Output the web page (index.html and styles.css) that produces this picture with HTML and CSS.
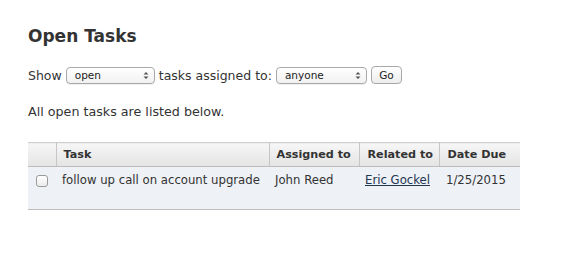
FILE: index.html
```html
<!DOCTYPE html>
<html>
<head>
<meta charset="utf-8">
<link rel="stylesheet" href="styles.css">
</head>
<body>
<div class="page">
  <h1 class="title">Open Tasks</h1>
  <form class="filter">
    <span>Show</span>
    <span class="sel sel-status"><select><option>open</option></select><svg class="arrows" width="6" height="9" viewBox="0 0 6 9"><path d="M0.5 3.5 L3 1 L5.5 3.5Z M0.5 5.5 L3 8 L5.5 5.5Z" fill="#555"/></svg></span>
    <span>tasks assigned to:</span>
    <span class="sel sel-user"><select><option>anyone</option></select><svg class="arrows" width="6" height="9" viewBox="0 0 6 9"><path d="M0.5 3.5 L3 1 L5.5 3.5Z M0.5 5.5 L3 8 L5.5 5.5Z" fill="#555"/></svg></span>
    <button type="button" class="go">Go</button>
  </form>
  <p class="note">All open tasks are listed below.</p>
  <table class="tasks">
    <thead>
      <tr>
        <th class="c-check"></th>
        <th class="c-task">Task</th>
        <th class="c-assigned">Assigned to</th>
        <th class="c-related">Related to</th>
        <th class="c-due">Date Due</th>
      </tr>
    </thead>
    <tbody>
      <tr>
        <td class="c-check"><span class="box"></span></td>
        <td>follow up call on account upgrade</td>
        <td>John Reed</td>
        <td><a href="#">Eric Gockel</a></td>
        <td>1/25/2015</td>
      </tr>
    </tbody>
  </table>
</div>
</body>
</html>
```
FILE: styles.css
```css
* { box-sizing: border-box; }
body {
  margin: 0;
  background: #fff;
  font-family: "DejaVu Sans", sans-serif;
  color: #333;
  font-size: 12.7px;
}
.page {
  padding: 25px 0 0 28px;
}
.title {
  margin: 0;
  font-size: 17px;
  line-height: 22px;
  font-weight: bold;
  color: #333;
}
.filter {
  display: flex;
  align-items: center;
  gap: 4px;
  margin-top: 18px;
  height: 20px;
  font-size: 12.5px;
}
.sel {
  position: relative;
  display: inline-block;
}
.sel select {
  appearance: none;
  -webkit-appearance: none;
  display: block;
  height: 17px;
  border: 1px solid #a9a9a9;
  border-radius: 4px;
  background: linear-gradient(#fff, #f1f1f1);
  font-family: "DejaVu Sans", sans-serif;
  font-size: 10.5px;
  color: #222;
  padding: 0 0 0 8px;
  margin: 0;
  box-shadow: 0 1px 0 rgba(0,0,0,0.06);
}
.sel-status select { width: 89px; }
.sel-user select { width: 91px; }
.arrows {
  position: absolute;
  right: 6px;
  top: 4px;
  pointer-events: none;
}
.go {
  height: 18px;
  width: 31px;
  padding: 0;
  border: 1px solid #a9a9a9;
  border-radius: 4px;
  background: linear-gradient(#fff, #ededed);
  font-family: "DejaVu Sans", sans-serif;
  font-size: 10.5px;
  color: #222;
  margin-left: 0;
}
.note {
  margin: 19px 0 0;
  line-height: 16px;
}
.tasks {
  margin-top: 22px;
  width: 492px;
  table-layout: fixed;
  border-collapse: collapse;
  border-top: 1px solid #cfcfcf;
  border-bottom: 1px solid #bdbdbd;
}
.tasks th {
  height: 24px;
  padding: 0 7px;
  text-align: left;
  font-weight: bold;
  font-size: 11.2px;
  background: linear-gradient(#f6f6f6, #e4e4e4);
  border-left: 1px solid #c6c6c6;
  border-bottom: 1px solid #bcbcbc;
  color: #333;
  white-space: nowrap;
  overflow: hidden;
}
.tasks th:first-child { border-left: none; }
.tasks th.c-related, .tasks th.c-due { padding-left: 8px; }
.tasks td {
  height: 43px;
  padding: 6px 6px 0;
  vertical-align: top;
  font-size: 11.7px;
  background: #eef1f6;
  white-space: nowrap;
  overflow: hidden;
}
.tasks td:last-child { padding-left: 7px; }
.c-check { width: 28px; }
.c-task { width: 213px; }
.c-assigned { width: 90px; }
.c-related { width: 80px; }
.c-due { width: 81px; }
.tasks td.c-check { padding: 8px 0 0 8px; }
.box {
  display: block;
  width: 12px;
  height: 12px;
  border: 1px solid #9a9a9a;
  border-radius: 3px;
  background: linear-gradient(#fff, #ececec);
}
.tasks a {
  color: #1f3550;
  text-decoration: underline;
}
```
